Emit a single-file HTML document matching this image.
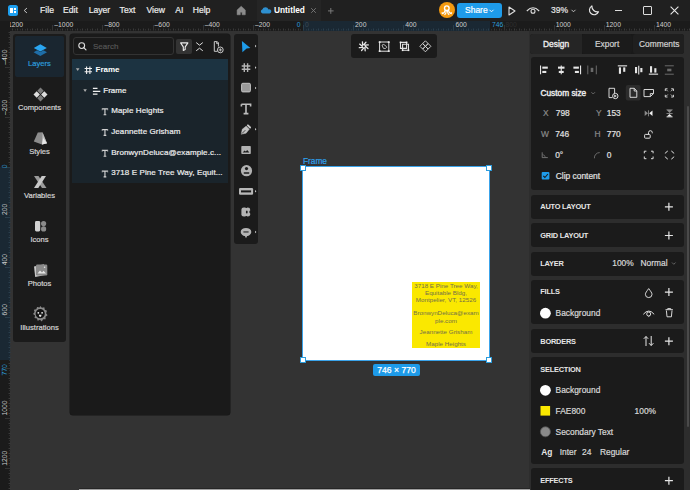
<!DOCTYPE html>
<html><head><meta charset="utf-8">
<style>
*{margin:0;padding:0;box-sizing:border-box}
html,body{width:690px;height:490px;overflow:hidden;background:#333;font-family:"Liberation Sans",sans-serif;color:#ddd}
.a{position:absolute}
.t{position:absolute;white-space:nowrap;line-height:1;-webkit-text-stroke:0.2px currentColor}
svg{position:absolute;overflow:visible}
</style></head><body>
<!-- top bar -->
<div class="a" style="left:0;top:0;width:690px;height:21px;background:#202020"></div>
<div class="a" style="left:257px;top:0;width:64px;height:21px;background:#252525"></div>
<!-- ruler -->
<div class="a" style="left:0;top:21px;width:690px;height:10px;background:#1b1b1b"></div>
<div class="a" style="left:303px;top:21px;width:187px;height:10px;background:#1a2833"></div>
<div class="a" style="left:0;top:21px;width:10px;height:469px;background:#1b1b1b"></div>
<div class="a" style="left:0;top:167px;width:10px;height:193px;background:#1a2833"></div>

<!-- RULER SVG --><svg style="left:0;top:0" width="690" height="490"><line x1="12.5" y1="28.5" x2="12.5" y2="30.5" stroke="#3a3a3a" stroke-width="1"/><line x1="15.5" y1="29" x2="15.5" y2="30.5" stroke="#2e2e2e" stroke-width="1"/><line x1="17.5" y1="28.5" x2="17.5" y2="30.5" stroke="#3a3a3a" stroke-width="1"/><line x1="20.5" y1="29" x2="20.5" y2="30.5" stroke="#2e2e2e" stroke-width="1"/><line x1="22.5" y1="28.5" x2="22.5" y2="30.5" stroke="#3a3a3a" stroke-width="1"/><line x1="25.5" y1="29" x2="25.5" y2="30.5" stroke="#2e2e2e" stroke-width="1"/><line x1="27.5" y1="28.5" x2="27.5" y2="30.5" stroke="#3a3a3a" stroke-width="1"/><line x1="30.5" y1="29" x2="30.5" y2="30.5" stroke="#2e2e2e" stroke-width="1"/><line x1="32.5" y1="28.5" x2="32.5" y2="30.5" stroke="#3a3a3a" stroke-width="1"/><line x1="35.5" y1="29" x2="35.5" y2="30.5" stroke="#2e2e2e" stroke-width="1"/><line x1="37.5" y1="28.5" x2="37.5" y2="30.5" stroke="#3a3a3a" stroke-width="1"/><line x1="40.5" y1="29" x2="40.5" y2="30.5" stroke="#2e2e2e" stroke-width="1"/><line x1="42.5" y1="28.5" x2="42.5" y2="30.5" stroke="#3a3a3a" stroke-width="1"/><line x1="45.5" y1="29" x2="45.5" y2="30.5" stroke="#2e2e2e" stroke-width="1"/><line x1="47.5" y1="28.5" x2="47.5" y2="30.5" stroke="#3a3a3a" stroke-width="1"/><line x1="50.5" y1="29" x2="50.5" y2="30.5" stroke="#2e2e2e" stroke-width="1"/><line x1="52.5" y1="25" x2="52.5" y2="30.5" stroke="#333" stroke-width="1"/><line x1="55.5" y1="29" x2="55.5" y2="30.5" stroke="#2e2e2e" stroke-width="1"/><line x1="57.5" y1="28.5" x2="57.5" y2="30.5" stroke="#3a3a3a" stroke-width="1"/><line x1="60.5" y1="29" x2="60.5" y2="30.5" stroke="#2e2e2e" stroke-width="1"/><line x1="62.5" y1="28.5" x2="62.5" y2="30.5" stroke="#3a3a3a" stroke-width="1"/><line x1="65.5" y1="29" x2="65.5" y2="30.5" stroke="#2e2e2e" stroke-width="1"/><line x1="67.5" y1="28.5" x2="67.5" y2="30.5" stroke="#3a3a3a" stroke-width="1"/><line x1="70.5" y1="29" x2="70.5" y2="30.5" stroke="#2e2e2e" stroke-width="1"/><line x1="72.5" y1="28.5" x2="72.5" y2="30.5" stroke="#3a3a3a" stroke-width="1"/><line x1="75.5" y1="29" x2="75.5" y2="30.5" stroke="#2e2e2e" stroke-width="1"/><line x1="77.5" y1="28.5" x2="77.5" y2="30.5" stroke="#3a3a3a" stroke-width="1"/><line x1="80.5" y1="29" x2="80.5" y2="30.5" stroke="#2e2e2e" stroke-width="1"/><line x1="82.5" y1="28.5" x2="82.5" y2="30.5" stroke="#3a3a3a" stroke-width="1"/><line x1="85.5" y1="29" x2="85.5" y2="30.5" stroke="#2e2e2e" stroke-width="1"/><line x1="87.5" y1="28.5" x2="87.5" y2="30.5" stroke="#3a3a3a" stroke-width="1"/><line x1="90.5" y1="29" x2="90.5" y2="30.5" stroke="#2e2e2e" stroke-width="1"/><line x1="92.5" y1="28.5" x2="92.5" y2="30.5" stroke="#3a3a3a" stroke-width="1"/><line x1="95.5" y1="29" x2="95.5" y2="30.5" stroke="#2e2e2e" stroke-width="1"/><line x1="97.5" y1="28.5" x2="97.5" y2="30.5" stroke="#3a3a3a" stroke-width="1"/><line x1="100.5" y1="29" x2="100.5" y2="30.5" stroke="#2e2e2e" stroke-width="1"/><line x1="102.5" y1="25" x2="102.5" y2="30.5" stroke="#333" stroke-width="1"/><line x1="105.5" y1="29" x2="105.5" y2="30.5" stroke="#2e2e2e" stroke-width="1"/><line x1="107.5" y1="28.5" x2="107.5" y2="30.5" stroke="#3a3a3a" stroke-width="1"/><line x1="110.5" y1="29" x2="110.5" y2="30.5" stroke="#2e2e2e" stroke-width="1"/><line x1="112.5" y1="28.5" x2="112.5" y2="30.5" stroke="#3a3a3a" stroke-width="1"/><line x1="115.5" y1="29" x2="115.5" y2="30.5" stroke="#2e2e2e" stroke-width="1"/><line x1="118.5" y1="28.5" x2="118.5" y2="30.5" stroke="#3a3a3a" stroke-width="1"/><line x1="120.5" y1="29" x2="120.5" y2="30.5" stroke="#2e2e2e" stroke-width="1"/><line x1="123.5" y1="28.5" x2="123.5" y2="30.5" stroke="#3a3a3a" stroke-width="1"/><line x1="125.5" y1="29" x2="125.5" y2="30.5" stroke="#2e2e2e" stroke-width="1"/><line x1="128.5" y1="28.5" x2="128.5" y2="30.5" stroke="#3a3a3a" stroke-width="1"/><line x1="130.5" y1="29" x2="130.5" y2="30.5" stroke="#2e2e2e" stroke-width="1"/><line x1="133.5" y1="28.5" x2="133.5" y2="30.5" stroke="#3a3a3a" stroke-width="1"/><line x1="135.5" y1="29" x2="135.5" y2="30.5" stroke="#2e2e2e" stroke-width="1"/><line x1="138.5" y1="28.5" x2="138.5" y2="30.5" stroke="#3a3a3a" stroke-width="1"/><line x1="140.5" y1="29" x2="140.5" y2="30.5" stroke="#2e2e2e" stroke-width="1"/><line x1="143.5" y1="28.5" x2="143.5" y2="30.5" stroke="#3a3a3a" stroke-width="1"/><line x1="145.5" y1="29" x2="145.5" y2="30.5" stroke="#2e2e2e" stroke-width="1"/><line x1="148.5" y1="28.5" x2="148.5" y2="30.5" stroke="#3a3a3a" stroke-width="1"/><line x1="150.5" y1="29" x2="150.5" y2="30.5" stroke="#2e2e2e" stroke-width="1"/><line x1="153.5" y1="25" x2="153.5" y2="30.5" stroke="#333" stroke-width="1"/><line x1="155.5" y1="29" x2="155.5" y2="30.5" stroke="#2e2e2e" stroke-width="1"/><line x1="158.5" y1="28.5" x2="158.5" y2="30.5" stroke="#3a3a3a" stroke-width="1"/><line x1="160.5" y1="29" x2="160.5" y2="30.5" stroke="#2e2e2e" stroke-width="1"/><line x1="163.5" y1="28.5" x2="163.5" y2="30.5" stroke="#3a3a3a" stroke-width="1"/><line x1="165.5" y1="29" x2="165.5" y2="30.5" stroke="#2e2e2e" stroke-width="1"/><line x1="168.5" y1="28.5" x2="168.5" y2="30.5" stroke="#3a3a3a" stroke-width="1"/><line x1="170.5" y1="29" x2="170.5" y2="30.5" stroke="#2e2e2e" stroke-width="1"/><line x1="173.5" y1="28.5" x2="173.5" y2="30.5" stroke="#3a3a3a" stroke-width="1"/><line x1="175.5" y1="29" x2="175.5" y2="30.5" stroke="#2e2e2e" stroke-width="1"/><line x1="178.5" y1="28.5" x2="178.5" y2="30.5" stroke="#3a3a3a" stroke-width="1"/><line x1="180.5" y1="29" x2="180.5" y2="30.5" stroke="#2e2e2e" stroke-width="1"/><line x1="183.5" y1="28.5" x2="183.5" y2="30.5" stroke="#3a3a3a" stroke-width="1"/><line x1="185.5" y1="29" x2="185.5" y2="30.5" stroke="#2e2e2e" stroke-width="1"/><line x1="188.5" y1="28.5" x2="188.5" y2="30.5" stroke="#3a3a3a" stroke-width="1"/><line x1="190.5" y1="29" x2="190.5" y2="30.5" stroke="#2e2e2e" stroke-width="1"/><line x1="193.5" y1="28.5" x2="193.5" y2="30.5" stroke="#3a3a3a" stroke-width="1"/><line x1="195.5" y1="29" x2="195.5" y2="30.5" stroke="#2e2e2e" stroke-width="1"/><line x1="198.5" y1="28.5" x2="198.5" y2="30.5" stroke="#3a3a3a" stroke-width="1"/><line x1="200.5" y1="29" x2="200.5" y2="30.5" stroke="#2e2e2e" stroke-width="1"/><line x1="203.5" y1="25" x2="203.5" y2="30.5" stroke="#333" stroke-width="1"/><line x1="205.5" y1="29" x2="205.5" y2="30.5" stroke="#2e2e2e" stroke-width="1"/><line x1="208.5" y1="28.5" x2="208.5" y2="30.5" stroke="#3a3a3a" stroke-width="1"/><line x1="210.5" y1="29" x2="210.5" y2="30.5" stroke="#2e2e2e" stroke-width="1"/><line x1="213.5" y1="28.5" x2="213.5" y2="30.5" stroke="#3a3a3a" stroke-width="1"/><line x1="215.5" y1="29" x2="215.5" y2="30.5" stroke="#2e2e2e" stroke-width="1"/><line x1="218.5" y1="28.5" x2="218.5" y2="30.5" stroke="#3a3a3a" stroke-width="1"/><line x1="220.5" y1="29" x2="220.5" y2="30.5" stroke="#2e2e2e" stroke-width="1"/><line x1="223.5" y1="28.5" x2="223.5" y2="30.5" stroke="#3a3a3a" stroke-width="1"/><line x1="225.5" y1="29" x2="225.5" y2="30.5" stroke="#2e2e2e" stroke-width="1"/><line x1="228.5" y1="28.5" x2="228.5" y2="30.5" stroke="#3a3a3a" stroke-width="1"/><line x1="230.5" y1="29" x2="230.5" y2="30.5" stroke="#2e2e2e" stroke-width="1"/><line x1="233.5" y1="28.5" x2="233.5" y2="30.5" stroke="#3a3a3a" stroke-width="1"/><line x1="235.5" y1="29" x2="235.5" y2="30.5" stroke="#2e2e2e" stroke-width="1"/><line x1="238.5" y1="28.5" x2="238.5" y2="30.5" stroke="#3a3a3a" stroke-width="1"/><line x1="240.5" y1="29" x2="240.5" y2="30.5" stroke="#2e2e2e" stroke-width="1"/><line x1="243.5" y1="28.5" x2="243.5" y2="30.5" stroke="#3a3a3a" stroke-width="1"/><line x1="245.5" y1="29" x2="245.5" y2="30.5" stroke="#2e2e2e" stroke-width="1"/><line x1="248.5" y1="28.5" x2="248.5" y2="30.5" stroke="#3a3a3a" stroke-width="1"/><line x1="250.5" y1="29" x2="250.5" y2="30.5" stroke="#2e2e2e" stroke-width="1"/><line x1="253.5" y1="25" x2="253.5" y2="30.5" stroke="#333" stroke-width="1"/><line x1="255.5" y1="29" x2="255.5" y2="30.5" stroke="#2e2e2e" stroke-width="1"/><line x1="258.5" y1="28.5" x2="258.5" y2="30.5" stroke="#3a3a3a" stroke-width="1"/><line x1="260.5" y1="29" x2="260.5" y2="30.5" stroke="#2e2e2e" stroke-width="1"/><line x1="263.5" y1="28.5" x2="263.5" y2="30.5" stroke="#3a3a3a" stroke-width="1"/><line x1="265.5" y1="29" x2="265.5" y2="30.5" stroke="#2e2e2e" stroke-width="1"/><line x1="268.5" y1="28.5" x2="268.5" y2="30.5" stroke="#3a3a3a" stroke-width="1"/><line x1="270.5" y1="29" x2="270.5" y2="30.5" stroke="#2e2e2e" stroke-width="1"/><line x1="273.5" y1="28.5" x2="273.5" y2="30.5" stroke="#3a3a3a" stroke-width="1"/><line x1="275.5" y1="29" x2="275.5" y2="30.5" stroke="#2e2e2e" stroke-width="1"/><line x1="278.5" y1="28.5" x2="278.5" y2="30.5" stroke="#3a3a3a" stroke-width="1"/><line x1="280.5" y1="29" x2="280.5" y2="30.5" stroke="#2e2e2e" stroke-width="1"/><line x1="283.5" y1="28.5" x2="283.5" y2="30.5" stroke="#3a3a3a" stroke-width="1"/><line x1="285.5" y1="29" x2="285.5" y2="30.5" stroke="#2e2e2e" stroke-width="1"/><line x1="288.5" y1="28.5" x2="288.5" y2="30.5" stroke="#3a3a3a" stroke-width="1"/><line x1="290.5" y1="29" x2="290.5" y2="30.5" stroke="#2e2e2e" stroke-width="1"/><line x1="293.5" y1="28.5" x2="293.5" y2="30.5" stroke="#3a3a3a" stroke-width="1"/><line x1="295.5" y1="29" x2="295.5" y2="30.5" stroke="#2e2e2e" stroke-width="1"/><line x1="298.5" y1="28.5" x2="298.5" y2="30.5" stroke="#3a3a3a" stroke-width="1"/><line x1="300.5" y1="29" x2="300.5" y2="30.5" stroke="#2e2e2e" stroke-width="1"/><line x1="303.5" y1="25" x2="303.5" y2="30.5" stroke="#2a3e4c" stroke-width="1"/><line x1="306.5" y1="29" x2="306.5" y2="30.5" stroke="#253540" stroke-width="1"/><line x1="308.5" y1="28.5" x2="308.5" y2="30.5" stroke="#2a3f4e" stroke-width="1"/><line x1="311.5" y1="29" x2="311.5" y2="30.5" stroke="#253540" stroke-width="1"/><line x1="313.5" y1="28.5" x2="313.5" y2="30.5" stroke="#2a3f4e" stroke-width="1"/><line x1="316.5" y1="29" x2="316.5" y2="30.5" stroke="#253540" stroke-width="1"/><line x1="318.5" y1="28.5" x2="318.5" y2="30.5" stroke="#2a3f4e" stroke-width="1"/><line x1="321.5" y1="29" x2="321.5" y2="30.5" stroke="#253540" stroke-width="1"/><line x1="323.5" y1="28.5" x2="323.5" y2="30.5" stroke="#2a3f4e" stroke-width="1"/><line x1="326.5" y1="29" x2="326.5" y2="30.5" stroke="#253540" stroke-width="1"/><line x1="328.5" y1="28.5" x2="328.5" y2="30.5" stroke="#2a3f4e" stroke-width="1"/><line x1="331.5" y1="29" x2="331.5" y2="30.5" stroke="#253540" stroke-width="1"/><line x1="333.5" y1="28.5" x2="333.5" y2="30.5" stroke="#2a3f4e" stroke-width="1"/><line x1="336.5" y1="29" x2="336.5" y2="30.5" stroke="#253540" stroke-width="1"/><line x1="338.5" y1="28.5" x2="338.5" y2="30.5" stroke="#2a3f4e" stroke-width="1"/><line x1="341.5" y1="29" x2="341.5" y2="30.5" stroke="#253540" stroke-width="1"/><line x1="343.5" y1="28.5" x2="343.5" y2="30.5" stroke="#2a3f4e" stroke-width="1"/><line x1="346.5" y1="29" x2="346.5" y2="30.5" stroke="#253540" stroke-width="1"/><line x1="348.5" y1="28.5" x2="348.5" y2="30.5" stroke="#2a3f4e" stroke-width="1"/><line x1="351.5" y1="29" x2="351.5" y2="30.5" stroke="#253540" stroke-width="1"/><line x1="353.5" y1="25" x2="353.5" y2="30.5" stroke="#2a3e4c" stroke-width="1"/><line x1="356.5" y1="29" x2="356.5" y2="30.5" stroke="#253540" stroke-width="1"/><line x1="358.5" y1="28.5" x2="358.5" y2="30.5" stroke="#2a3f4e" stroke-width="1"/><line x1="361.5" y1="29" x2="361.5" y2="30.5" stroke="#253540" stroke-width="1"/><line x1="363.5" y1="28.5" x2="363.5" y2="30.5" stroke="#2a3f4e" stroke-width="1"/><line x1="366.5" y1="29" x2="366.5" y2="30.5" stroke="#253540" stroke-width="1"/><line x1="368.5" y1="28.5" x2="368.5" y2="30.5" stroke="#2a3f4e" stroke-width="1"/><line x1="371.5" y1="29" x2="371.5" y2="30.5" stroke="#253540" stroke-width="1"/><line x1="373.5" y1="28.5" x2="373.5" y2="30.5" stroke="#2a3f4e" stroke-width="1"/><line x1="376.5" y1="29" x2="376.5" y2="30.5" stroke="#253540" stroke-width="1"/><line x1="378.5" y1="28.5" x2="378.5" y2="30.5" stroke="#2a3f4e" stroke-width="1"/><line x1="381.5" y1="29" x2="381.5" y2="30.5" stroke="#253540" stroke-width="1"/><line x1="383.5" y1="28.5" x2="383.5" y2="30.5" stroke="#2a3f4e" stroke-width="1"/><line x1="386.5" y1="29" x2="386.5" y2="30.5" stroke="#253540" stroke-width="1"/><line x1="388.5" y1="28.5" x2="388.5" y2="30.5" stroke="#2a3f4e" stroke-width="1"/><line x1="391.5" y1="29" x2="391.5" y2="30.5" stroke="#253540" stroke-width="1"/><line x1="393.5" y1="28.5" x2="393.5" y2="30.5" stroke="#2a3f4e" stroke-width="1"/><line x1="396.5" y1="29" x2="396.5" y2="30.5" stroke="#253540" stroke-width="1"/><line x1="398.5" y1="28.5" x2="398.5" y2="30.5" stroke="#2a3f4e" stroke-width="1"/><line x1="401.5" y1="29" x2="401.5" y2="30.5" stroke="#253540" stroke-width="1"/><line x1="403.5" y1="25" x2="403.5" y2="30.5" stroke="#2a3e4c" stroke-width="1"/><line x1="406.5" y1="29" x2="406.5" y2="30.5" stroke="#253540" stroke-width="1"/><line x1="408.5" y1="28.5" x2="408.5" y2="30.5" stroke="#2a3f4e" stroke-width="1"/><line x1="411.5" y1="29" x2="411.5" y2="30.5" stroke="#253540" stroke-width="1"/><line x1="413.5" y1="28.5" x2="413.5" y2="30.5" stroke="#2a3f4e" stroke-width="1"/><line x1="416.5" y1="29" x2="416.5" y2="30.5" stroke="#253540" stroke-width="1"/><line x1="418.5" y1="28.5" x2="418.5" y2="30.5" stroke="#2a3f4e" stroke-width="1"/><line x1="421.5" y1="29" x2="421.5" y2="30.5" stroke="#253540" stroke-width="1"/><line x1="423.5" y1="28.5" x2="423.5" y2="30.5" stroke="#2a3f4e" stroke-width="1"/><line x1="426.5" y1="29" x2="426.5" y2="30.5" stroke="#253540" stroke-width="1"/><line x1="428.5" y1="28.5" x2="428.5" y2="30.5" stroke="#2a3f4e" stroke-width="1"/><line x1="431.5" y1="29" x2="431.5" y2="30.5" stroke="#253540" stroke-width="1"/><line x1="433.5" y1="28.5" x2="433.5" y2="30.5" stroke="#2a3f4e" stroke-width="1"/><line x1="436.5" y1="29" x2="436.5" y2="30.5" stroke="#253540" stroke-width="1"/><line x1="438.5" y1="28.5" x2="438.5" y2="30.5" stroke="#2a3f4e" stroke-width="1"/><line x1="441.5" y1="29" x2="441.5" y2="30.5" stroke="#253540" stroke-width="1"/><line x1="443.5" y1="28.5" x2="443.5" y2="30.5" stroke="#2a3f4e" stroke-width="1"/><line x1="446.5" y1="29" x2="446.5" y2="30.5" stroke="#253540" stroke-width="1"/><line x1="448.5" y1="28.5" x2="448.5" y2="30.5" stroke="#2a3f4e" stroke-width="1"/><line x1="451.5" y1="29" x2="451.5" y2="30.5" stroke="#253540" stroke-width="1"/><line x1="453.5" y1="25" x2="453.5" y2="30.5" stroke="#2a3e4c" stroke-width="1"/><line x1="456.5" y1="29" x2="456.5" y2="30.5" stroke="#253540" stroke-width="1"/><line x1="458.5" y1="28.5" x2="458.5" y2="30.5" stroke="#2a3f4e" stroke-width="1"/><line x1="461.5" y1="29" x2="461.5" y2="30.5" stroke="#253540" stroke-width="1"/><line x1="463.5" y1="28.5" x2="463.5" y2="30.5" stroke="#2a3f4e" stroke-width="1"/><line x1="466.5" y1="29" x2="466.5" y2="30.5" stroke="#253540" stroke-width="1"/><line x1="468.5" y1="28.5" x2="468.5" y2="30.5" stroke="#2a3f4e" stroke-width="1"/><line x1="471.5" y1="29" x2="471.5" y2="30.5" stroke="#253540" stroke-width="1"/><line x1="473.5" y1="28.5" x2="473.5" y2="30.5" stroke="#2a3f4e" stroke-width="1"/><line x1="476.5" y1="29" x2="476.5" y2="30.5" stroke="#253540" stroke-width="1"/><line x1="478.5" y1="28.5" x2="478.5" y2="30.5" stroke="#2a3f4e" stroke-width="1"/><line x1="481.5" y1="29" x2="481.5" y2="30.5" stroke="#253540" stroke-width="1"/><line x1="483.5" y1="28.5" x2="483.5" y2="30.5" stroke="#2a3f4e" stroke-width="1"/><line x1="486.5" y1="29" x2="486.5" y2="30.5" stroke="#253540" stroke-width="1"/><line x1="488.5" y1="28.5" x2="488.5" y2="30.5" stroke="#2a3f4e" stroke-width="1"/><line x1="491.5" y1="29" x2="491.5" y2="30.5" stroke="#2e2e2e" stroke-width="1"/><line x1="494.5" y1="28.5" x2="494.5" y2="30.5" stroke="#3a3a3a" stroke-width="1"/><line x1="496.5" y1="29" x2="496.5" y2="30.5" stroke="#2e2e2e" stroke-width="1"/><line x1="499.5" y1="28.5" x2="499.5" y2="30.5" stroke="#3a3a3a" stroke-width="1"/><line x1="501.5" y1="29" x2="501.5" y2="30.5" stroke="#2e2e2e" stroke-width="1"/><line x1="504.5" y1="25" x2="504.5" y2="30.5" stroke="#333" stroke-width="1"/><line x1="506.5" y1="29" x2="506.5" y2="30.5" stroke="#2e2e2e" stroke-width="1"/><line x1="509.5" y1="28.5" x2="509.5" y2="30.5" stroke="#3a3a3a" stroke-width="1"/><line x1="511.5" y1="29" x2="511.5" y2="30.5" stroke="#2e2e2e" stroke-width="1"/><line x1="514.5" y1="28.5" x2="514.5" y2="30.5" stroke="#3a3a3a" stroke-width="1"/><line x1="516.5" y1="29" x2="516.5" y2="30.5" stroke="#2e2e2e" stroke-width="1"/><line x1="519.5" y1="28.5" x2="519.5" y2="30.5" stroke="#3a3a3a" stroke-width="1"/><line x1="521.5" y1="29" x2="521.5" y2="30.5" stroke="#2e2e2e" stroke-width="1"/><line x1="524.5" y1="28.5" x2="524.5" y2="30.5" stroke="#3a3a3a" stroke-width="1"/><line x1="526.5" y1="29" x2="526.5" y2="30.5" stroke="#2e2e2e" stroke-width="1"/><line x1="529.5" y1="28.5" x2="529.5" y2="30.5" stroke="#3a3a3a" stroke-width="1"/><line x1="531.5" y1="29" x2="531.5" y2="30.5" stroke="#2e2e2e" stroke-width="1"/><line x1="534.5" y1="28.5" x2="534.5" y2="30.5" stroke="#3a3a3a" stroke-width="1"/><line x1="536.5" y1="29" x2="536.5" y2="30.5" stroke="#2e2e2e" stroke-width="1"/><line x1="539.5" y1="28.5" x2="539.5" y2="30.5" stroke="#3a3a3a" stroke-width="1"/><line x1="541.5" y1="29" x2="541.5" y2="30.5" stroke="#2e2e2e" stroke-width="1"/><line x1="544.5" y1="28.5" x2="544.5" y2="30.5" stroke="#3a3a3a" stroke-width="1"/><line x1="546.5" y1="29" x2="546.5" y2="30.5" stroke="#2e2e2e" stroke-width="1"/><line x1="549.5" y1="28.5" x2="549.5" y2="30.5" stroke="#3a3a3a" stroke-width="1"/><line x1="551.5" y1="29" x2="551.5" y2="30.5" stroke="#2e2e2e" stroke-width="1"/><line x1="554.5" y1="25" x2="554.5" y2="30.5" stroke="#333" stroke-width="1"/><line x1="556.5" y1="29" x2="556.5" y2="30.5" stroke="#2e2e2e" stroke-width="1"/><line x1="559.5" y1="28.5" x2="559.5" y2="30.5" stroke="#3a3a3a" stroke-width="1"/><line x1="561.5" y1="29" x2="561.5" y2="30.5" stroke="#2e2e2e" stroke-width="1"/><line x1="564.5" y1="28.5" x2="564.5" y2="30.5" stroke="#3a3a3a" stroke-width="1"/><line x1="566.5" y1="29" x2="566.5" y2="30.5" stroke="#2e2e2e" stroke-width="1"/><line x1="569.5" y1="28.5" x2="569.5" y2="30.5" stroke="#3a3a3a" stroke-width="1"/><line x1="571.5" y1="29" x2="571.5" y2="30.5" stroke="#2e2e2e" stroke-width="1"/><line x1="574.5" y1="28.5" x2="574.5" y2="30.5" stroke="#3a3a3a" stroke-width="1"/><line x1="576.5" y1="29" x2="576.5" y2="30.5" stroke="#2e2e2e" stroke-width="1"/><line x1="579.5" y1="28.5" x2="579.5" y2="30.5" stroke="#3a3a3a" stroke-width="1"/><line x1="581.5" y1="29" x2="581.5" y2="30.5" stroke="#2e2e2e" stroke-width="1"/><line x1="584.5" y1="28.5" x2="584.5" y2="30.5" stroke="#3a3a3a" stroke-width="1"/><line x1="586.5" y1="29" x2="586.5" y2="30.5" stroke="#2e2e2e" stroke-width="1"/><line x1="589.5" y1="28.5" x2="589.5" y2="30.5" stroke="#3a3a3a" stroke-width="1"/><line x1="591.5" y1="29" x2="591.5" y2="30.5" stroke="#2e2e2e" stroke-width="1"/><line x1="594.5" y1="28.5" x2="594.5" y2="30.5" stroke="#3a3a3a" stroke-width="1"/><line x1="596.5" y1="29" x2="596.5" y2="30.5" stroke="#2e2e2e" stroke-width="1"/><line x1="599.5" y1="28.5" x2="599.5" y2="30.5" stroke="#3a3a3a" stroke-width="1"/><line x1="601.5" y1="29" x2="601.5" y2="30.5" stroke="#2e2e2e" stroke-width="1"/><line x1="604.5" y1="25" x2="604.5" y2="30.5" stroke="#333" stroke-width="1"/><line x1="606.5" y1="29" x2="606.5" y2="30.5" stroke="#2e2e2e" stroke-width="1"/><line x1="609.5" y1="28.5" x2="609.5" y2="30.5" stroke="#3a3a3a" stroke-width="1"/><line x1="611.5" y1="29" x2="611.5" y2="30.5" stroke="#2e2e2e" stroke-width="1"/><line x1="614.5" y1="28.5" x2="614.5" y2="30.5" stroke="#3a3a3a" stroke-width="1"/><line x1="616.5" y1="29" x2="616.5" y2="30.5" stroke="#2e2e2e" stroke-width="1"/><line x1="619.5" y1="28.5" x2="619.5" y2="30.5" stroke="#3a3a3a" stroke-width="1"/><line x1="621.5" y1="29" x2="621.5" y2="30.5" stroke="#2e2e2e" stroke-width="1"/><line x1="624.5" y1="28.5" x2="624.5" y2="30.5" stroke="#3a3a3a" stroke-width="1"/><line x1="626.5" y1="29" x2="626.5" y2="30.5" stroke="#2e2e2e" stroke-width="1"/><line x1="629.5" y1="28.5" x2="629.5" y2="30.5" stroke="#3a3a3a" stroke-width="1"/><line x1="631.5" y1="29" x2="631.5" y2="30.5" stroke="#2e2e2e" stroke-width="1"/><line x1="634.5" y1="28.5" x2="634.5" y2="30.5" stroke="#3a3a3a" stroke-width="1"/><line x1="636.5" y1="29" x2="636.5" y2="30.5" stroke="#2e2e2e" stroke-width="1"/><line x1="639.5" y1="28.5" x2="639.5" y2="30.5" stroke="#3a3a3a" stroke-width="1"/><line x1="641.5" y1="29" x2="641.5" y2="30.5" stroke="#2e2e2e" stroke-width="1"/><line x1="644.5" y1="28.5" x2="644.5" y2="30.5" stroke="#3a3a3a" stroke-width="1"/><line x1="646.5" y1="29" x2="646.5" y2="30.5" stroke="#2e2e2e" stroke-width="1"/><line x1="649.5" y1="28.5" x2="649.5" y2="30.5" stroke="#3a3a3a" stroke-width="1"/><line x1="651.5" y1="29" x2="651.5" y2="30.5" stroke="#2e2e2e" stroke-width="1"/><line x1="654.5" y1="25" x2="654.5" y2="30.5" stroke="#333" stroke-width="1"/><line x1="656.5" y1="29" x2="656.5" y2="30.5" stroke="#2e2e2e" stroke-width="1"/><line x1="659.5" y1="28.5" x2="659.5" y2="30.5" stroke="#3a3a3a" stroke-width="1"/><line x1="661.5" y1="29" x2="661.5" y2="30.5" stroke="#2e2e2e" stroke-width="1"/><line x1="664.5" y1="28.5" x2="664.5" y2="30.5" stroke="#3a3a3a" stroke-width="1"/><line x1="666.5" y1="29" x2="666.5" y2="30.5" stroke="#2e2e2e" stroke-width="1"/><line x1="669.5" y1="28.5" x2="669.5" y2="30.5" stroke="#3a3a3a" stroke-width="1"/><line x1="671.5" y1="29" x2="671.5" y2="30.5" stroke="#2e2e2e" stroke-width="1"/><line x1="674.5" y1="28.5" x2="674.5" y2="30.5" stroke="#3a3a3a" stroke-width="1"/><line x1="676.5" y1="29" x2="676.5" y2="30.5" stroke="#2e2e2e" stroke-width="1"/><line x1="679.5" y1="28.5" x2="679.5" y2="30.5" stroke="#3a3a3a" stroke-width="1"/><line x1="682.5" y1="29" x2="682.5" y2="30.5" stroke="#2e2e2e" stroke-width="1"/><line x1="684.5" y1="28.5" x2="684.5" y2="30.5" stroke="#3a3a3a" stroke-width="1"/><line x1="687.5" y1="29" x2="687.5" y2="30.5" stroke="#2e2e2e" stroke-width="1"/><line x1="689.5" y1="28.5" x2="689.5" y2="30.5" stroke="#3a3a3a" stroke-width="1"/><g font-family="Liberation Sans" font-size="6.8"><text x="4.2" y="27.2" fill="#cdcdcd">–1200</text><text x="54.3" y="27.2" fill="#cdcdcd">–1000</text><text x="104.5" y="27.2" fill="#cdcdcd">–800</text><text x="154.6" y="27.2" fill="#cdcdcd">–600</text><text x="204.7" y="27.2" fill="#cdcdcd">–400</text><text x="254.9" y="27.2" fill="#cdcdcd">–200</text><text x="305.0" y="27.2" fill="#3a4a55">0</text><text x="355.1" y="27.2" fill="#cdcdcd">200</text><text x="405.3" y="27.2" fill="#cdcdcd">400</text><text x="455.4" y="27.2" fill="#cdcdcd">600</text><text x="505.5" y="27.2" fill="#2e2e2e">800</text><text x="555.7" y="27.2" fill="#cdcdcd">1000</text><text x="605.8" y="27.2" fill="#cdcdcd">1200</text><text x="655.9" y="27.2" fill="#cdcdcd">1400</text><text x="300.5" y="27.2" fill="#2d9cdb" text-anchor="end">0</text><text x="492" y="27.2" fill="#2d9cdb">746</text></g><line x1="8.5" y1="32.5" x2="10.5" y2="32.5" stroke="#3a3a3a" stroke-width="1"/><line x1="9" y1="34.5" x2="10.5" y2="34.5" stroke="#2e2e2e" stroke-width="1"/><line x1="8.5" y1="37.5" x2="10.5" y2="37.5" stroke="#3a3a3a" stroke-width="1"/><line x1="9" y1="39.5" x2="10.5" y2="39.5" stroke="#2e2e2e" stroke-width="1"/><line x1="8.5" y1="42.5" x2="10.5" y2="42.5" stroke="#3a3a3a" stroke-width="1"/><line x1="9" y1="44.5" x2="10.5" y2="44.5" stroke="#2e2e2e" stroke-width="1"/><line x1="8.5" y1="47.5" x2="10.5" y2="47.5" stroke="#3a3a3a" stroke-width="1"/><line x1="9" y1="49.5" x2="10.5" y2="49.5" stroke="#2e2e2e" stroke-width="1"/><line x1="8.5" y1="52.5" x2="10.5" y2="52.5" stroke="#3a3a3a" stroke-width="1"/><line x1="9" y1="54.5" x2="10.5" y2="54.5" stroke="#2e2e2e" stroke-width="1"/><line x1="8.5" y1="57.5" x2="10.5" y2="57.5" stroke="#3a3a3a" stroke-width="1"/><line x1="9" y1="59.5" x2="10.5" y2="59.5" stroke="#2e2e2e" stroke-width="1"/><line x1="8.5" y1="62.5" x2="10.5" y2="62.5" stroke="#3a3a3a" stroke-width="1"/><line x1="9" y1="64.5" x2="10.5" y2="64.5" stroke="#2e2e2e" stroke-width="1"/><line x1="5" y1="67.5" x2="10.5" y2="67.5" stroke="#333" stroke-width="1"/><line x1="9" y1="69.5" x2="10.5" y2="69.5" stroke="#2e2e2e" stroke-width="1"/><line x1="8.5" y1="72.5" x2="10.5" y2="72.5" stroke="#3a3a3a" stroke-width="1"/><line x1="9" y1="74.5" x2="10.5" y2="74.5" stroke="#2e2e2e" stroke-width="1"/><line x1="8.5" y1="77.5" x2="10.5" y2="77.5" stroke="#3a3a3a" stroke-width="1"/><line x1="9" y1="79.5" x2="10.5" y2="79.5" stroke="#2e2e2e" stroke-width="1"/><line x1="8.5" y1="82.5" x2="10.5" y2="82.5" stroke="#3a3a3a" stroke-width="1"/><line x1="9" y1="84.5" x2="10.5" y2="84.5" stroke="#2e2e2e" stroke-width="1"/><line x1="8.5" y1="87.5" x2="10.5" y2="87.5" stroke="#3a3a3a" stroke-width="1"/><line x1="9" y1="89.5" x2="10.5" y2="89.5" stroke="#2e2e2e" stroke-width="1"/><line x1="8.5" y1="92.5" x2="10.5" y2="92.5" stroke="#3a3a3a" stroke-width="1"/><line x1="9" y1="94.5" x2="10.5" y2="94.5" stroke="#2e2e2e" stroke-width="1"/><line x1="8.5" y1="97.5" x2="10.5" y2="97.5" stroke="#3a3a3a" stroke-width="1"/><line x1="9" y1="99.5" x2="10.5" y2="99.5" stroke="#2e2e2e" stroke-width="1"/><line x1="8.5" y1="102.5" x2="10.5" y2="102.5" stroke="#3a3a3a" stroke-width="1"/><line x1="9" y1="104.5" x2="10.5" y2="104.5" stroke="#2e2e2e" stroke-width="1"/><line x1="8.5" y1="107.5" x2="10.5" y2="107.5" stroke="#3a3a3a" stroke-width="1"/><line x1="9" y1="109.5" x2="10.5" y2="109.5" stroke="#2e2e2e" stroke-width="1"/><line x1="8.5" y1="112.5" x2="10.5" y2="112.5" stroke="#3a3a3a" stroke-width="1"/><line x1="9" y1="114.5" x2="10.5" y2="114.5" stroke="#2e2e2e" stroke-width="1"/><line x1="5" y1="117.5" x2="10.5" y2="117.5" stroke="#333" stroke-width="1"/><line x1="9" y1="119.5" x2="10.5" y2="119.5" stroke="#2e2e2e" stroke-width="1"/><line x1="8.5" y1="122.5" x2="10.5" y2="122.5" stroke="#3a3a3a" stroke-width="1"/><line x1="9" y1="124.5" x2="10.5" y2="124.5" stroke="#2e2e2e" stroke-width="1"/><line x1="8.5" y1="127.5" x2="10.5" y2="127.5" stroke="#3a3a3a" stroke-width="1"/><line x1="9" y1="129.5" x2="10.5" y2="129.5" stroke="#2e2e2e" stroke-width="1"/><line x1="8.5" y1="132.5" x2="10.5" y2="132.5" stroke="#3a3a3a" stroke-width="1"/><line x1="9" y1="134.5" x2="10.5" y2="134.5" stroke="#2e2e2e" stroke-width="1"/><line x1="8.5" y1="137.5" x2="10.5" y2="137.5" stroke="#3a3a3a" stroke-width="1"/><line x1="9" y1="139.5" x2="10.5" y2="139.5" stroke="#2e2e2e" stroke-width="1"/><line x1="8.5" y1="142.5" x2="10.5" y2="142.5" stroke="#3a3a3a" stroke-width="1"/><line x1="9" y1="144.5" x2="10.5" y2="144.5" stroke="#2e2e2e" stroke-width="1"/><line x1="8.5" y1="147.5" x2="10.5" y2="147.5" stroke="#3a3a3a" stroke-width="1"/><line x1="9" y1="149.5" x2="10.5" y2="149.5" stroke="#2e2e2e" stroke-width="1"/><line x1="8.5" y1="152.5" x2="10.5" y2="152.5" stroke="#3a3a3a" stroke-width="1"/><line x1="9" y1="154.5" x2="10.5" y2="154.5" stroke="#2e2e2e" stroke-width="1"/><line x1="8.5" y1="157.5" x2="10.5" y2="157.5" stroke="#3a3a3a" stroke-width="1"/><line x1="9" y1="159.5" x2="10.5" y2="159.5" stroke="#2e2e2e" stroke-width="1"/><line x1="8.5" y1="162.5" x2="10.5" y2="162.5" stroke="#3a3a3a" stroke-width="1"/><line x1="9" y1="164.5" x2="10.5" y2="164.5" stroke="#2e2e2e" stroke-width="1"/><line x1="5" y1="167.5" x2="10.5" y2="167.5" stroke="#2a3e4c" stroke-width="1"/><line x1="9" y1="170.5" x2="10.5" y2="170.5" stroke="#253540" stroke-width="1"/><line x1="8.5" y1="172.5" x2="10.5" y2="172.5" stroke="#2a3f4e" stroke-width="1"/><line x1="9" y1="175.5" x2="10.5" y2="175.5" stroke="#253540" stroke-width="1"/><line x1="8.5" y1="177.5" x2="10.5" y2="177.5" stroke="#2a3f4e" stroke-width="1"/><line x1="9" y1="180.5" x2="10.5" y2="180.5" stroke="#253540" stroke-width="1"/><line x1="8.5" y1="182.5" x2="10.5" y2="182.5" stroke="#2a3f4e" stroke-width="1"/><line x1="9" y1="185.5" x2="10.5" y2="185.5" stroke="#253540" stroke-width="1"/><line x1="8.5" y1="187.5" x2="10.5" y2="187.5" stroke="#2a3f4e" stroke-width="1"/><line x1="9" y1="190.5" x2="10.5" y2="190.5" stroke="#253540" stroke-width="1"/><line x1="8.5" y1="192.5" x2="10.5" y2="192.5" stroke="#2a3f4e" stroke-width="1"/><line x1="9" y1="195.5" x2="10.5" y2="195.5" stroke="#253540" stroke-width="1"/><line x1="8.5" y1="197.5" x2="10.5" y2="197.5" stroke="#2a3f4e" stroke-width="1"/><line x1="9" y1="200.5" x2="10.5" y2="200.5" stroke="#253540" stroke-width="1"/><line x1="8.5" y1="202.5" x2="10.5" y2="202.5" stroke="#2a3f4e" stroke-width="1"/><line x1="9" y1="205.5" x2="10.5" y2="205.5" stroke="#253540" stroke-width="1"/><line x1="8.5" y1="207.5" x2="10.5" y2="207.5" stroke="#2a3f4e" stroke-width="1"/><line x1="9" y1="210.5" x2="10.5" y2="210.5" stroke="#253540" stroke-width="1"/><line x1="8.5" y1="212.5" x2="10.5" y2="212.5" stroke="#2a3f4e" stroke-width="1"/><line x1="9" y1="215.5" x2="10.5" y2="215.5" stroke="#253540" stroke-width="1"/><line x1="5" y1="217.5" x2="10.5" y2="217.5" stroke="#2a3e4c" stroke-width="1"/><line x1="9" y1="220.5" x2="10.5" y2="220.5" stroke="#253540" stroke-width="1"/><line x1="8.5" y1="222.5" x2="10.5" y2="222.5" stroke="#2a3f4e" stroke-width="1"/><line x1="9" y1="225.5" x2="10.5" y2="225.5" stroke="#253540" stroke-width="1"/><line x1="8.5" y1="227.5" x2="10.5" y2="227.5" stroke="#2a3f4e" stroke-width="1"/><line x1="9" y1="230.5" x2="10.5" y2="230.5" stroke="#253540" stroke-width="1"/><line x1="8.5" y1="232.5" x2="10.5" y2="232.5" stroke="#2a3f4e" stroke-width="1"/><line x1="9" y1="235.5" x2="10.5" y2="235.5" stroke="#253540" stroke-width="1"/><line x1="8.5" y1="237.5" x2="10.5" y2="237.5" stroke="#2a3f4e" stroke-width="1"/><line x1="9" y1="240.5" x2="10.5" y2="240.5" stroke="#253540" stroke-width="1"/><line x1="8.5" y1="242.5" x2="10.5" y2="242.5" stroke="#2a3f4e" stroke-width="1"/><line x1="9" y1="245.5" x2="10.5" y2="245.5" stroke="#253540" stroke-width="1"/><line x1="8.5" y1="247.5" x2="10.5" y2="247.5" stroke="#2a3f4e" stroke-width="1"/><line x1="9" y1="250.5" x2="10.5" y2="250.5" stroke="#253540" stroke-width="1"/><line x1="8.5" y1="252.5" x2="10.5" y2="252.5" stroke="#2a3f4e" stroke-width="1"/><line x1="9" y1="255.5" x2="10.5" y2="255.5" stroke="#253540" stroke-width="1"/><line x1="8.5" y1="257.5" x2="10.5" y2="257.5" stroke="#2a3f4e" stroke-width="1"/><line x1="9" y1="260.5" x2="10.5" y2="260.5" stroke="#253540" stroke-width="1"/><line x1="8.5" y1="262.5" x2="10.5" y2="262.5" stroke="#2a3f4e" stroke-width="1"/><line x1="9" y1="265.5" x2="10.5" y2="265.5" stroke="#253540" stroke-width="1"/><line x1="5" y1="267.5" x2="10.5" y2="267.5" stroke="#2a3e4c" stroke-width="1"/><line x1="9" y1="270.5" x2="10.5" y2="270.5" stroke="#253540" stroke-width="1"/><line x1="8.5" y1="272.5" x2="10.5" y2="272.5" stroke="#2a3f4e" stroke-width="1"/><line x1="9" y1="275.5" x2="10.5" y2="275.5" stroke="#253540" stroke-width="1"/><line x1="8.5" y1="277.5" x2="10.5" y2="277.5" stroke="#2a3f4e" stroke-width="1"/><line x1="9" y1="280.5" x2="10.5" y2="280.5" stroke="#253540" stroke-width="1"/><line x1="8.5" y1="282.5" x2="10.5" y2="282.5" stroke="#2a3f4e" stroke-width="1"/><line x1="9" y1="285.5" x2="10.5" y2="285.5" stroke="#253540" stroke-width="1"/><line x1="8.5" y1="287.5" x2="10.5" y2="287.5" stroke="#2a3f4e" stroke-width="1"/><line x1="9" y1="290.5" x2="10.5" y2="290.5" stroke="#253540" stroke-width="1"/><line x1="8.5" y1="292.5" x2="10.5" y2="292.5" stroke="#2a3f4e" stroke-width="1"/><line x1="9" y1="295.5" x2="10.5" y2="295.5" stroke="#253540" stroke-width="1"/><line x1="8.5" y1="297.5" x2="10.5" y2="297.5" stroke="#2a3f4e" stroke-width="1"/><line x1="9" y1="300.5" x2="10.5" y2="300.5" stroke="#253540" stroke-width="1"/><line x1="8.5" y1="302.5" x2="10.5" y2="302.5" stroke="#2a3f4e" stroke-width="1"/><line x1="9" y1="305.5" x2="10.5" y2="305.5" stroke="#253540" stroke-width="1"/><line x1="8.5" y1="307.5" x2="10.5" y2="307.5" stroke="#2a3f4e" stroke-width="1"/><line x1="9" y1="310.5" x2="10.5" y2="310.5" stroke="#253540" stroke-width="1"/><line x1="8.5" y1="312.5" x2="10.5" y2="312.5" stroke="#2a3f4e" stroke-width="1"/><line x1="9" y1="315.5" x2="10.5" y2="315.5" stroke="#253540" stroke-width="1"/><line x1="5" y1="317.5" x2="10.5" y2="317.5" stroke="#2a3e4c" stroke-width="1"/><line x1="9" y1="320.5" x2="10.5" y2="320.5" stroke="#253540" stroke-width="1"/><line x1="8.5" y1="322.5" x2="10.5" y2="322.5" stroke="#2a3f4e" stroke-width="1"/><line x1="9" y1="325.5" x2="10.5" y2="325.5" stroke="#253540" stroke-width="1"/><line x1="8.5" y1="327.5" x2="10.5" y2="327.5" stroke="#2a3f4e" stroke-width="1"/><line x1="9" y1="330.5" x2="10.5" y2="330.5" stroke="#253540" stroke-width="1"/><line x1="8.5" y1="332.5" x2="10.5" y2="332.5" stroke="#2a3f4e" stroke-width="1"/><line x1="9" y1="335.5" x2="10.5" y2="335.5" stroke="#253540" stroke-width="1"/><line x1="8.5" y1="337.5" x2="10.5" y2="337.5" stroke="#2a3f4e" stroke-width="1"/><line x1="9" y1="340.5" x2="10.5" y2="340.5" stroke="#253540" stroke-width="1"/><line x1="8.5" y1="342.5" x2="10.5" y2="342.5" stroke="#2a3f4e" stroke-width="1"/><line x1="9" y1="345.5" x2="10.5" y2="345.5" stroke="#253540" stroke-width="1"/><line x1="8.5" y1="347.5" x2="10.5" y2="347.5" stroke="#2a3f4e" stroke-width="1"/><line x1="9" y1="350.5" x2="10.5" y2="350.5" stroke="#253540" stroke-width="1"/><line x1="8.5" y1="352.5" x2="10.5" y2="352.5" stroke="#2a3f4e" stroke-width="1"/><line x1="9" y1="355.5" x2="10.5" y2="355.5" stroke="#253540" stroke-width="1"/><line x1="8.5" y1="357.5" x2="10.5" y2="357.5" stroke="#2a3f4e" stroke-width="1"/><line x1="9" y1="360.5" x2="10.5" y2="360.5" stroke="#253540" stroke-width="1"/><line x1="8.5" y1="363.5" x2="10.5" y2="363.5" stroke="#3a3a3a" stroke-width="1"/><line x1="9" y1="365.5" x2="10.5" y2="365.5" stroke="#2e2e2e" stroke-width="1"/><line x1="5" y1="368.5" x2="10.5" y2="368.5" stroke="#333" stroke-width="1"/><line x1="9" y1="370.5" x2="10.5" y2="370.5" stroke="#2e2e2e" stroke-width="1"/><line x1="8.5" y1="373.5" x2="10.5" y2="373.5" stroke="#3a3a3a" stroke-width="1"/><line x1="9" y1="375.5" x2="10.5" y2="375.5" stroke="#2e2e2e" stroke-width="1"/><line x1="8.5" y1="378.5" x2="10.5" y2="378.5" stroke="#3a3a3a" stroke-width="1"/><line x1="9" y1="380.5" x2="10.5" y2="380.5" stroke="#2e2e2e" stroke-width="1"/><line x1="8.5" y1="383.5" x2="10.5" y2="383.5" stroke="#3a3a3a" stroke-width="1"/><line x1="9" y1="385.5" x2="10.5" y2="385.5" stroke="#2e2e2e" stroke-width="1"/><line x1="8.5" y1="388.5" x2="10.5" y2="388.5" stroke="#3a3a3a" stroke-width="1"/><line x1="9" y1="390.5" x2="10.5" y2="390.5" stroke="#2e2e2e" stroke-width="1"/><line x1="8.5" y1="393.5" x2="10.5" y2="393.5" stroke="#3a3a3a" stroke-width="1"/><line x1="9" y1="395.5" x2="10.5" y2="395.5" stroke="#2e2e2e" stroke-width="1"/><line x1="8.5" y1="398.5" x2="10.5" y2="398.5" stroke="#3a3a3a" stroke-width="1"/><line x1="9" y1="400.5" x2="10.5" y2="400.5" stroke="#2e2e2e" stroke-width="1"/><line x1="8.5" y1="403.5" x2="10.5" y2="403.5" stroke="#3a3a3a" stroke-width="1"/><line x1="9" y1="405.5" x2="10.5" y2="405.5" stroke="#2e2e2e" stroke-width="1"/><line x1="8.5" y1="408.5" x2="10.5" y2="408.5" stroke="#3a3a3a" stroke-width="1"/><line x1="9" y1="410.5" x2="10.5" y2="410.5" stroke="#2e2e2e" stroke-width="1"/><line x1="8.5" y1="413.5" x2="10.5" y2="413.5" stroke="#3a3a3a" stroke-width="1"/><line x1="9" y1="415.5" x2="10.5" y2="415.5" stroke="#2e2e2e" stroke-width="1"/><line x1="5" y1="418.5" x2="10.5" y2="418.5" stroke="#333" stroke-width="1"/><line x1="9" y1="420.5" x2="10.5" y2="420.5" stroke="#2e2e2e" stroke-width="1"/><line x1="8.5" y1="423.5" x2="10.5" y2="423.5" stroke="#3a3a3a" stroke-width="1"/><line x1="9" y1="425.5" x2="10.5" y2="425.5" stroke="#2e2e2e" stroke-width="1"/><line x1="8.5" y1="428.5" x2="10.5" y2="428.5" stroke="#3a3a3a" stroke-width="1"/><line x1="9" y1="430.5" x2="10.5" y2="430.5" stroke="#2e2e2e" stroke-width="1"/><line x1="8.5" y1="433.5" x2="10.5" y2="433.5" stroke="#3a3a3a" stroke-width="1"/><line x1="9" y1="435.5" x2="10.5" y2="435.5" stroke="#2e2e2e" stroke-width="1"/><line x1="8.5" y1="438.5" x2="10.5" y2="438.5" stroke="#3a3a3a" stroke-width="1"/><line x1="9" y1="440.5" x2="10.5" y2="440.5" stroke="#2e2e2e" stroke-width="1"/><line x1="8.5" y1="443.5" x2="10.5" y2="443.5" stroke="#3a3a3a" stroke-width="1"/><line x1="9" y1="445.5" x2="10.5" y2="445.5" stroke="#2e2e2e" stroke-width="1"/><line x1="8.5" y1="448.5" x2="10.5" y2="448.5" stroke="#3a3a3a" stroke-width="1"/><line x1="9" y1="450.5" x2="10.5" y2="450.5" stroke="#2e2e2e" stroke-width="1"/><line x1="8.5" y1="453.5" x2="10.5" y2="453.5" stroke="#3a3a3a" stroke-width="1"/><line x1="9" y1="455.5" x2="10.5" y2="455.5" stroke="#2e2e2e" stroke-width="1"/><line x1="8.5" y1="458.5" x2="10.5" y2="458.5" stroke="#3a3a3a" stroke-width="1"/><line x1="9" y1="460.5" x2="10.5" y2="460.5" stroke="#2e2e2e" stroke-width="1"/><line x1="8.5" y1="463.5" x2="10.5" y2="463.5" stroke="#3a3a3a" stroke-width="1"/><line x1="9" y1="465.5" x2="10.5" y2="465.5" stroke="#2e2e2e" stroke-width="1"/><line x1="5" y1="468.5" x2="10.5" y2="468.5" stroke="#333" stroke-width="1"/><line x1="9" y1="470.5" x2="10.5" y2="470.5" stroke="#2e2e2e" stroke-width="1"/><line x1="8.5" y1="473.5" x2="10.5" y2="473.5" stroke="#3a3a3a" stroke-width="1"/><line x1="9" y1="475.5" x2="10.5" y2="475.5" stroke="#2e2e2e" stroke-width="1"/><line x1="8.5" y1="478.5" x2="10.5" y2="478.5" stroke="#3a3a3a" stroke-width="1"/><line x1="9" y1="480.5" x2="10.5" y2="480.5" stroke="#2e2e2e" stroke-width="1"/><line x1="8.5" y1="483.5" x2="10.5" y2="483.5" stroke="#3a3a3a" stroke-width="1"/><line x1="9" y1="485.5" x2="10.5" y2="485.5" stroke="#2e2e2e" stroke-width="1"/><line x1="8.5" y1="488.5" x2="10.5" y2="488.5" stroke="#3a3a3a" stroke-width="1"/><g font-family="Liberation Sans" font-size="6.8"><text transform="translate(6.8 64.7) rotate(-90)" fill="#cdcdcd">–400</text><text transform="translate(6.8 114.9) rotate(-90)" fill="#cdcdcd">–200</text><text transform="translate(6.8 215.1) rotate(-90)" fill="#cdcdcd">200</text><text transform="translate(6.8 265.3) rotate(-90)" fill="#cdcdcd">400</text><text transform="translate(6.8 315.4) rotate(-90)" fill="#cdcdcd">600</text><text transform="translate(6.8 415.6) rotate(-90)" fill="#cdcdcd">1000</text><text transform="translate(6.8 465.8) rotate(-90)" fill="#cdcdcd">1200</text><text transform="translate(6.8 164.5) rotate(-90)" fill="#2d9cdb" text-anchor="end">0</text><text transform="translate(6.8 375.5) rotate(-90)" fill="#2d9cdb" text-anchor="start">770</text></g></svg><!-- /RULER SVG -->
<div class="a" style="left:0;top:21px;width:10px;height:10px;background:#1b1b1b"></div>
<!-- TOPBAR CONTENT -->
<div class="a" style="left:7.7px;top:5.3px;width:10.5px;height:10.5px;background:#1ea0f0;border-radius:2.5px"></div>
<div class="a" style="left:9.9px;top:8.1px;width:3px;height:4.8px;background:#fff"></div>
<div class="a" style="left:14.1px;top:8.1px;width:1.9px;height:1.8px;background:#fff"></div>
<div class="a" style="left:14.1px;top:11.1px;width:1.9px;height:1.8px;background:#fff"></div>
<svg style="left:23px;top:7px" width="5" height="7"><path d="M3.9 1.1 L1.2 3.5 L3.9 5.9" stroke="#ccc" stroke-width="1" fill="none"/></svg>
<div class="t" style="left:40.1px;top:5.72px;font-size:8.6px;color:#ececec">File</div>
<div class="t" style="left:63px;top:5.72px;font-size:8.6px;color:#ececec">Edit</div>
<div class="t" style="left:88.7px;top:5.72px;font-size:8.6px;color:#ececec">Layer</div>
<div class="t" style="left:119.6px;top:5.72px;font-size:8.6px;color:#ececec">Text</div>
<div class="t" style="left:146.5px;top:5.72px;font-size:8.6px;color:#ececec">View</div>
<div class="t" style="left:175.2px;top:5.72px;font-size:8.6px;color:#ececec">AI</div>
<div class="t" style="left:192.7px;top:5.72px;font-size:8.6px;color:#ececec">Help</div>
<svg style="left:0;top:0" width="300" height="20"><path d="M241.2 6.2 L245.3 10 V14.8 H242.1 V12.2 H240.3 V14.8 H237.1 V10 Z" fill="#8c8c8c" stroke="#8c8c8c" stroke-width="0.5" stroke-linejoin="round"/></svg>
<svg style="left:0;top:0" width="300" height="20"><path d="M262.6 13.4 A2 2 0 0 1 262.3 9.5 A3.4 3.4 0 0 1 268.6 9.4 A2 2 0 0 1 271.3 11.5 A1.9 1.9 0 0 1 269.6 13.4 Z" fill="#2e90d0"/></svg>
<div class="t" style="left:274px;top:6.27px;font-size:8.3px;font-weight:bold;-webkit-text-stroke:0;color:#fff">Untitled</div>
<svg style="left:310.5px;top:8px" width="5" height="5"><path d="M0.2 0.2 L4.8 4.8 M4.8 0.2 L0.2 4.8" stroke="#7a7a7a" stroke-width="0.9"/></svg>
<svg style="left:328.3px;top:7.5px" width="6" height="6"><path d="M2.8 0 V5.8 M0 2.9 H5.6" stroke="#7a7a7a" stroke-width="1"/></svg>
<div class="a" style="left:438.7px;top:2px;width:16px;height:16px;background:#f59a0f;border-radius:50%"></div>
<svg style="left:0;top:0" width="690" height="20"><circle cx="446.8" cy="8.2" r="2.3" fill="none" stroke="#fff" stroke-width="1.4"/><path d="M445.2 10.2 Q444.6 13.2 442.3 13.6 M446.3 10.8 Q446 14 444.8 14.6 M447.4 10.8 Q447.7 14 448.9 14.6 M448.5 10.2 Q449 13.2 451.3 13.6" stroke="#fff" stroke-width="1.1" fill="none" stroke-linecap="round"/><path d="M442.3 13.6 Q441.5 12.8 442.6 12 M451.3 13.6 Q452.1 12.8 451 12" stroke="#fff" stroke-width="0.9" fill="none"/></svg>
<div class="a" style="left:457px;top:2.5px;width:44.5px;height:15.5px;background:#1e9be9;border-radius:3px"></div>
<div class="t" style="left:465px;top:5.9px;font-size:8.5px;color:#fff">Share</div>
<svg style="left:489px;top:9px" width="5" height="4"><path d="M0.5 0.8 L2.5 2.8 L4.5 0.8" stroke="#fff" stroke-width="0.9" fill="none"/></svg>
<svg style="left:508px;top:5.5px" width="8" height="10"><path d="M1 1 L7 5 L1 9 Z" stroke="#ddd" stroke-width="1.1" fill="none" stroke-linejoin="round"/></svg>
<svg style="left:526px;top:6px" width="14" height="9"><path d="M0.8 5 Q7 -1.5 13.2 5" stroke="#ddd" stroke-width="1.1" fill="none"/><circle cx="7" cy="5.2" r="2" fill="none" stroke="#ddd" stroke-width="1.1"/></svg>
<div class="t" style="left:551px;top:5.9px;font-size:8.5px;color:#e6e6e6">39%</div>
<svg style="left:571px;top:9px" width="5" height="4"><path d="M0.5 0.8 L2.5 2.8 L4.5 0.8" stroke="#ccc" stroke-width="0.9" fill="none"/></svg>
<svg style="left:0;top:0" width="690" height="20"><path d="M591.9 5.9 A4.7 4.7 0 1 0 598.5 11.8 A5.6 5.6 0 0 1 591.9 5.9 Z" stroke="#e6e6e6" stroke-width="1.15" fill="none" stroke-linejoin="round"/></svg>
<div class="a" style="left:615px;top:10px;width:7px;height:1px;background:#ddd"></div>
<div class="a" style="left:643px;top:6px;width:9px;height:9px;border:1.1px solid #ddd;border-radius:1px"></div>
<svg style="left:670px;top:6px" width="9" height="9"><path d="M0.6 0.6 L8.4 8.4 M8.4 0.6 L0.6 8.4" stroke="#e6e6e6" stroke-width="1.1"/></svg>

<!-- left nav -->
<div class="a" style="left:13px;top:34px;width:53px;height:308px;background:#1b1b1b;border-radius:3px"></div>
<div class="a" style="left:15px;top:35.7px;width:49px;height:41.8px;background:#1a2630;border-radius:2px"></div>

<!-- NAV --><svg style="left:0;top:0" width="70" height="340">
<path d="M33.6 52.3 L40.3 48.6 L47 52.3 L40.3 56 Z" fill="#1f6ea8"/>
<path d="M33.2 48 L40.3 44 L47.4 48 L40.3 52 Z" fill="#1a2630"/>
<path d="M33.8 48 L40.3 44.3 L46.8 48 L40.3 51.6 Z" fill="#2aa6f2"/>
<g>
<path d="M37.30 90.7 L40.5 87.50 L43.70 90.7 L40.5 93.90 Z" fill="#7c7c7c"/>
<path d="M37.30 98.3 L40.5 95.10 L43.70 98.3 L40.5 101.50 Z" fill="#7c7c7c"/>
<path d="M33.50 94.5 L36.7 91.30 L39.90 94.5 L36.7 97.70 Z" fill="#dedede"/>
<path d="M41.10 94.5 L44.3 91.30 L47.50 94.5 L44.3 97.70 Z" fill="#dedede"/>
</g>
<path d="M37.8 132.5 L42.6 132.2 L47 143.2 L42 144.5 L33.8 141.5 Z" fill="#8c8c8c"/>
<path d="M42.6 132.8 L47 143.2 L42 144.5 Z" fill="#bdbdbd"/>
<path d="M43.2 138 L47 143.2 L42 144.5 Z" fill="#e8e8e8"/>
<path d="M34 176 H38.5 L46.5 188 H42 Z" fill="#9a9a9a"/>
<path d="M46 176 H41.7 L34 188 H38.3 Z" fill="#c8c8c8"/>
<rect x="35" y="221" width="5.2" height="10.5" rx="1.4" fill="#d2d2d2"/>
<circle cx="43.6" cy="223.6" r="2.6" fill="#8a8a8a"/>
<circle cx="43.6" cy="228.9" r="2.6" fill="#8a8a8a"/>
<path d="M34 266.5 L44 264.3 L45.2 275 L35.2 277 Z" fill="#c8c8c8"/>
<rect x="36" y="264.5" width="11.3" height="11" rx="1.2" fill="#8a8a8a"/>
<path d="M37.5 273.6 L40 270.6 L42 272.4 L43.6 270.8 L46 273.6 Z" fill="#e6e6e6"/>
<circle cx="44.6" cy="267.3" r="0.8" fill="#e6e6e6"/>
<path d="M40.2 306 L41.9 307.8 L44.3 307.3 L44.8 309.7 L47 310.8 L46.1 313.2 L47.6 315.3 L45.5 316.8 L45.6 319.2 L43.1 319.3 L41.8 321.4 L40 319.8 L37.7 320.7 L36.9 318.4 L34.5 317.9 L35.1 315.5 L33 314 L34.6 312 L33.9 309.7 L36.3 309.3 L37.1 307 L39.5 307.6 Z" fill="#8a8a8a"/>
<circle cx="40.2" cy="313.7" r="4.6" fill="#141414"/>
<circle cx="38.3" cy="312.8" r="0.9" fill="#eee"/>
<circle cx="42.1" cy="312.8" r="0.9" fill="#eee"/>
<path d="M38.8 314.8 H41.6 Q41.2 317 40.2 317 Q39.2 317 38.8 314.8 Z" fill="#eee"/>
</svg>
<div class="t" style="left:13px;width:53px;text-align:center;top:60.47px;font-size:7.6px;color:#2d9cdb">Layers</div>
<div class="t" style="left:13px;width:53px;text-align:center;top:104.47px;font-size:7.6px;color:#d4d4d4">Components</div>
<div class="t" style="left:13px;width:53px;text-align:center;top:148.47px;font-size:7.6px;color:#d4d4d4">Styles</div>
<div class="t" style="left:13px;width:53px;text-align:center;top:192.47px;font-size:7.6px;color:#d4d4d4">Variables</div>
<div class="t" style="left:13px;width:53px;text-align:center;top:236.47px;font-size:7.6px;color:#d4d4d4">Icons</div>
<div class="t" style="left:13px;width:53px;text-align:center;top:280.47px;font-size:7.6px;color:#d4d4d4">Photos</div>
<div class="t" style="left:13px;width:53px;text-align:center;top:324.47px;font-size:7.6px;color:#d4d4d4">Illustrations</div>
<!-- /NAV -->
<!-- layers panel -->
<div class="a" style="left:70px;top:34px;width:159.5px;height:381px;background:#1a1a1a;border-radius:3px;box-shadow:0 0 0 0.5px #161616"></div>
<div class="a" style="left:73px;top:37px;width:101px;height:18px;background:#1a1a1a;border:1px solid #333;border-radius:3px"></div>
<div class="a" style="left:176px;top:39px;width:16px;height:15px;background:#333;border-radius:2px"></div>
<div class="a" style="left:72px;top:59px;width:156px;height:21px;background:#1c3341"></div>
<div class="a" style="left:72px;top:80px;width:156px;height:103px;background:#1a242b"></div>

<!-- LP --><svg style="left:0;top:0" width="240" height="200">
<circle cx="81.7" cy="45.6" r="2.9" fill="none" stroke="#dedede" stroke-width="1.1"/>
<path d="M83.8 47.7 L86 49.9" stroke="#dedede" stroke-width="1.2" stroke-linecap="round"/>
<path d="M180.6 42.9 H187.9 L185.2 46.9 V49.6 L183.3 50.5 V46.9 Z" fill="none" stroke="#ececec" stroke-width="1.1" stroke-linejoin="round"/>
<path d="M196.2 42.6 L199.5 45.2 L202.8 42.6 M196.2 50.8 L199.5 48.2 L202.8 50.8" fill="none" stroke="#e0e0e0" stroke-width="1"/>
<path d="M218.4 46.5 V42.5 L216.6 41.6 H214.3 V51.3 H217.3" fill="none" stroke="#dcdcdc" stroke-width="0.9"/>
<path d="M216.6 41.6 V43.6 H218.4" fill="none" stroke="#dcdcdc" stroke-width="0.8"/>
<circle cx="220.3" cy="49.9" r="2.9" fill="#1b1b1b" stroke="#dcdcdc" stroke-width="0.9"/>
<path d="M220.3 48.3 V51.5 M218.7 49.9 H221.9" stroke="#dcdcdc" stroke-width="0.8"/>
<path d="M75.9 68.3 H79.5 L77.7 70.9 Z" fill="#aaa"/>
<path d="M86.6 66.5 V74 M89.9 66.5 V74 M84.6 68.5 H92 M84.6 71.8 H92" stroke="#f0f0f0" stroke-width="1.1"/>
<path d="M83.3 89.3 H86.9 L85.1 91.9 Z" fill="#aaa"/>
<path d="M92.9 88.4 H97.5 M92.9 91.3 H100.3 M92.9 94.2 H97.5" stroke="#f0f0f0" stroke-width="1.2"/>
<path d="M102.2 108.9 H107.7 M104.95 108.9 V114.7 M103.6 114.7 H106.3" stroke="#d2d2d2" stroke-width="1.15"/><path d="M102.2 108.3 V110.3 M107.7 108.3 V110.3" stroke="#d2d2d2" stroke-width="0.6"/>
<path d="M102.2 129.6 H107.7 M104.95 129.6 V135.4 M103.6 135.4 H106.3" stroke="#d2d2d2" stroke-width="1.15"/><path d="M102.2 129.0 V131.0 M107.7 129.0 V131.0" stroke="#d2d2d2" stroke-width="0.6"/>
<path d="M102.2 150.4 H107.7 M104.95 150.4 V156.2 M103.6 156.2 H106.3" stroke="#d2d2d2" stroke-width="1.15"/><path d="M102.2 149.8 V151.8 M107.7 149.8 V151.8" stroke="#d2d2d2" stroke-width="0.6"/>
<path d="M102.2 171.1 H107.7 M104.95 171.1 V176.9 M103.6 176.9 H106.3" stroke="#d2d2d2" stroke-width="1.15"/><path d="M102.2 170.5 V172.5 M107.7 170.5 V172.5" stroke="#d2d2d2" stroke-width="0.6"/>
</svg>
<div class="t" style="left:93px;top:43.33px;font-size:8px;color:#555;font-weight:normal;">Search</div>
<div class="t" style="left:95.5px;top:65.83px;font-size:8px;color:#fff;font-weight:bold;-webkit-text-stroke:0;">Frame</div>
<div class="t" style="left:103.3px;top:86.73px;font-size:8px;color:#f2f2f2;font-weight:normal;">Frame</div>
<div class="t" style="left:111.2px;top:107.13px;font-size:8px;color:#eee;font-weight:normal;letter-spacing:0.1px;">Maple Heights</div>
<div class="t" style="left:111.2px;top:127.83px;font-size:8px;color:#eee;font-weight:normal;letter-spacing:0.1px;">Jeannette Grisham</div>
<div class="t" style="left:111.2px;top:148.63px;font-size:8px;color:#eee;font-weight:normal;letter-spacing:0.1px;">BronwynDeluca@example.c...</div>
<div class="t" style="left:111.2px;top:169.33px;font-size:8px;color:#eee;font-weight:normal;letter-spacing:0.1px;">3718 E Pine Tree Way, Equit...</div>
<!-- /LP -->
<!-- toolbar -->
<div class="a" style="left:234px;top:34px;width:24px;height:210px;background:#1b1b1b;border-radius:3px"></div>
<!-- floating toolbar -->
<div class="a" style="left:351px;top:34px;width:86px;height:24px;background:#1b1b1b;border-radius:3px"></div>

<!-- TB --><svg style="left:0;top:0" width="270" height="250">
<path d="M241.9 41 L250.4 48.1 L246.6 48.4 L242.4 52.3 Z" fill="#1e9be9"/>
<path d="M241.7 66 H250.3 M241.7 69.3 H250.3 M244.3 63.3 V72 M247.6 63.3 V72" stroke="#b4b4b4" stroke-width="1.4"/>
<rect x="241.6" y="83.3" width="8.8" height="8.6" rx="1.2" fill="#9a9a9a" stroke="#c4c4c4" stroke-width="1"/>
<path d="M241.4 104.3 H250.6 V106.6 M241.4 104.3 V106.6 M246 104.3 V113.6 M243.6 113.6 H248.4" stroke="#bdbdbd" stroke-width="1.6" fill="none"/>
<path d="M241.2 134.3 L242.2 129.3 L246.2 126.1 L249.3 129.2 L246.1 133.2 Z" fill="#c2c2c2" stroke="#c2c2c2" stroke-width="0.4" stroke-linejoin="round"/>
<path d="M247.9 125.3 L250.1 127.5" stroke="#c8c8c8" stroke-width="1.9" stroke-linecap="round"/>
<path d="M241.9 133.6 L245.3 130.2" stroke="#1b1b1b" stroke-width="0.75"/>
<rect x="241.3" y="145.9" width="9.5" height="8.2" rx="0.8" fill="#b2b2b2"/>
<path d="M242.6 152.6 L244.6 150.5 L245.8 151.5 L247.2 150.1 L249.4 152.6 Z" fill="#1b1b1b"/>
<circle cx="246.5" cy="170.7" r="5.6" fill="#b2b2b2"/>
<circle cx="246.5" cy="168.6" r="1.6" fill="#1b1b1b"/>
<rect x="243.6" y="172.3" width="5.8" height="1.5" rx="0.7" fill="#1b1b1b"/>
<rect x="239" y="188.1" width="14.1" height="6.7" rx="1.2" fill="#b8b8b8"/>
<rect x="241" y="190.4" width="10.1" height="2" fill="#1b1b1b"/>
<rect x="241.4" y="207.4" width="8.8" height="9.2" rx="2.3" fill="#b4b4b4"/>
<circle cx="250.7" cy="212" r="1.4" fill="#1b1b1b"/>
<circle cx="246.3" cy="206.9" r="1" fill="#1b1b1b"/>
<circle cx="246.3" cy="217.1" r="1" fill="#1b1b1b"/>
<ellipse cx="246.8" cy="212" rx="0.9" ry="1.5" fill="#1b1b1b"/>
<ellipse cx="246" cy="232" rx="5.3" ry="4.1" fill="#b4b4b4"/>
<path d="M244.6 235.6 L246 238.2 L247.4 235.6 Z" fill="#b4b4b4"/>
<rect x="243.4" y="231.3" width="5.2" height="1.3" fill="#3a3a3a"/>
<path d="M255 44.8 L256.4 46.1 L255 47.4 Z" fill="#d0d0d0"/>
<path d="M255 66.3 L256.4 67.6 L255 68.9 Z" fill="#d0d0d0"/>
<path d="M255 86.7 L256.4 88.0 L255 89.3 Z" fill="#d0d0d0"/>
<path d="M255 128.0 L256.4 129.3 L255 130.6 Z" fill="#d0d0d0"/>
<path d="M255 189.9 L256.4 191.2 L255 192.5 Z" fill="#d0d0d0"/>
<path d="M255 230.7 L256.4 232.0 L255 233.3 Z" fill="#d0d0d0"/>
</svg>
<svg style="left:0;top:0" width="450" height="70">
<path d="M365.40 46.30 L367.95 48.51 M364.93 47.43 L365.17 50.79 M363.80 47.90 L361.59 50.45 M362.67 47.43 L359.31 47.67 M362.20 46.30 L359.65 44.09 M362.67 45.17 L362.43 41.81 M363.80 44.70 L366.01 42.15 M364.93 45.17 L368.29 44.93 " stroke="#e8e8e8" stroke-width="1.3" stroke-linecap="round" fill="none"/>
<g fill="none" stroke="#e0e0e0" stroke-width="1">
<rect x="379.6" y="42" width="9.2" height="9.2"/>
<path d="M382 45.2 Q383.3 43.8 384.8 45 L386.8 47.2 Q385.6 49.4 383.4 48.3 Z" stroke-width="0.8"/>
</g>
<g fill="#e8e8e8"><rect x="378.7" y="41.2" width="1.9" height="1.9" rx="0.4"/><rect x="387.8" y="41.2" width="1.9" height="1.9" rx="0.4"/><rect x="378.7" y="50.2" width="1.9" height="1.9" rx="0.4"/><rect x="387.8" y="50.2" width="1.9" height="1.9" rx="0.4"/></g>
<g fill="none" stroke="#e0e0e0" stroke-width="1.1">
<path d="M400.5 42.4 H406.6 V48.4 H400.5 Z"/>
<path d="M402.6 44.2 H408.5 V50.3 H402.6 Z"/>
</g>
<g fill="#f0f0f0"><rect x="399.7" y="41.6" width="1.6" height="1.6"/><rect x="405.8" y="41.6" width="1.6" height="1.6"/><rect x="407.7" y="49.5" width="1.6" height="1.6"/><rect x="401.8" y="49.5" width="1.6" height="1.6"/></g>
<path d="M422.70 43.50 L425.40 40.80 L428.10 43.50 L425.40 46.20 Z M419.90 46.30 L422.60 43.60 L425.30 46.30 L422.60 49.00 Z M425.50 46.30 L428.20 43.60 L430.90 46.30 L428.20 49.00 Z M422.70 49.10 L425.40 46.40 L428.10 49.10 L425.40 51.80 Z " fill="none" stroke="#d8d8d8" stroke-width="0.9"/>
</svg>
<!-- /TB -->
<!-- frame -->
<div class="t" style="left:303px;top:157.07px;font-size:8.3px;color:#2ea2ee">Frame</div>
<div class="a" style="left:302px;top:166px;width:188px;height:195px;background:#fff;border:1px solid #3aa3ea"></div>
<div class="a" style="left:412px;top:282px;width:68px;height:66px;background:#fae800"></div>
<!-- YT --><div class="t" style="left:396px;width:100px;text-align:center;top:283.11px;font-size:6.25px;color:#737048;-webkit-text-stroke:0">3718 E Pine Tree Way,</div>
<div class="t" style="left:396px;width:100px;text-align:center;top:290.31px;font-size:6.25px;color:#737048;-webkit-text-stroke:0">Equitable Bldg,</div>
<div class="t" style="left:396px;width:100px;text-align:center;top:297.31px;font-size:6.25px;color:#737048;-webkit-text-stroke:0">Montpelier, VT, 12526</div>
<div class="t" style="left:396px;width:100px;text-align:center;top:309.61px;font-size:6.25px;color:#737048;-webkit-text-stroke:0">BronwynDeluca@exam</div>
<div class="t" style="left:396px;width:100px;text-align:center;top:317.61px;font-size:6.25px;color:#737048;-webkit-text-stroke:0">ple.com</div>
<div class="t" style="left:396px;width:100px;text-align:center;top:329.31px;font-size:6.25px;color:#737048;-webkit-text-stroke:0">Jeannette Grisham</div>
<div class="t" style="left:396px;width:100px;text-align:center;top:341.31px;font-size:6.25px;color:#737048;-webkit-text-stroke:0">Maple Heights</div>
<!-- /YT -->
<div class="a" style="left:300px;top:165px;width:6px;height:6px;background:#fff;border:1px solid #2d9cdb"></div>
<div class="a" style="left:486px;top:165px;width:6px;height:6px;background:#fff;border:1px solid #2d9cdb"></div>
<div class="a" style="left:300px;top:357px;width:6px;height:6px;background:#fff;border:1px solid #2d9cdb"></div>
<div class="a" style="left:486px;top:357px;width:6px;height:6px;background:#fff;border:1px solid #2d9cdb"></div>
<div class="a" style="left:373px;top:364px;width:47px;height:12px;background:#1e9be9;border-radius:2px"></div>
<div class="t" style="left:373px;top:366.12px;width:47px;text-align:center;font-size:8.6px;color:#fff;-webkit-text-stroke:0.25px #fff">746 × 770</div>

<!-- right panel -->
<div class="a" style="left:529px;top:31px;width:161px;height:459px;background:#2d2d2d"></div>
<div class="a" style="left:530px;top:34px;width:154px;height:20px;background:#191919;border-radius:3px"></div>
<div class="a" style="left:530px;top:34px;width:52px;height:20px;background:#252525;border-radius:3px 0 0 3px"></div>
<div class="a" style="left:582px;top:34px;width:49.5px;height:20px;background:#1b1b1b;border-radius:3px"></div>
<div class="a" style="left:633px;top:34px;width:51px;height:20px;background:#1f1f1f;border-radius:3px"></div>
<div class="a" style="left:531px;top:57px;width:153px;height:133px;background:#1b1b1b;border-radius:3px"></div>
<div class="a" style="left:531px;top:195px;width:153px;height:24px;background:#1b1b1b;border-radius:3px"></div>
<div class="a" style="left:531px;top:223px;width:153px;height:24px;background:#1b1b1b;border-radius:3px"></div>
<div class="a" style="left:531px;top:252px;width:153px;height:24px;background:#1b1b1b;border-radius:3px"></div>
<div class="a" style="left:531px;top:280px;width:153px;height:44px;background:#1b1b1b;border-radius:3px"></div>
<div class="a" style="left:531px;top:329px;width:153px;height:24px;background:#1b1b1b;border-radius:3px"></div>
<div class="a" style="left:531px;top:357px;width:153px;height:107px;background:#1b1b1b;border-radius:3px"></div>
<div class="a" style="left:531px;top:468px;width:153px;height:30px;background:#1b1b1b;border-radius:3px"></div>
<div class="a" style="left:687px;top:106px;width:2px;height:321px;background:#4a4a4a;border-radius:1px"></div>
<div class="t" style="left:543px;top:39.99px;font-size:8.4px;color:#ececec;-webkit-text-stroke:0.35px #ececec;">Design</div>
<div class="t" style="left:595px;top:39.99px;font-size:8.4px;color:#d0d0d0;font-weight:normal;">Export</div>
<div class="t" style="left:639px;top:39.99px;font-size:8.4px;color:#d0d0d0;font-weight:normal;">Comments</div>
<div class="t" style="left:540.5px;top:89.47px;font-size:8.3px;color:#ececec;-webkit-text-stroke:0.4px #ececec">Custom size</div>
<div class="t" style="left:543px;top:109.29px;font-size:8.4px;color:#8a8a8a;font-weight:normal;">X</div>
<div class="t" style="left:555.8px;top:109.29px;font-size:8.4px;color:#e0e0e0;font-weight:normal;">798</div>
<div class="t" style="left:596px;top:109.29px;font-size:8.4px;color:#8a8a8a;font-weight:normal;">Y</div>
<div class="t" style="left:606.8px;top:109.29px;font-size:8.4px;color:#e0e0e0;font-weight:normal;">153</div>
<div class="t" style="left:541.1px;top:130.09px;font-size:8.4px;color:#8a8a8a;font-weight:normal;">W</div>
<div class="t" style="left:555.2px;top:130.09px;font-size:8.4px;color:#e0e0e0;font-weight:normal;">746</div>
<div class="t" style="left:594.4px;top:130.09px;font-size:8.4px;color:#8a8a8a;font-weight:normal;">H</div>
<div class="t" style="left:606.8px;top:130.09px;font-size:8.4px;color:#e0e0e0;font-weight:normal;">770</div>
<div class="t" style="left:555.2px;top:150.99px;font-size:8.4px;color:#e0e0e0;font-weight:normal;">0°</div>
<div class="t" style="left:606.8px;top:150.99px;font-size:8.4px;color:#e0e0e0;font-weight:normal;">0</div>
<div class="t" style="left:555.8px;top:171.79px;font-size:8.4px;color:#e0e0e0;font-weight:normal;">Clip content</div>
<div class="t" style="left:540.3px;top:203.13px;font-size:7.4px;letter-spacing:-0.22px;color:#e6e6e6;font-weight:bold;-webkit-text-stroke:0;">AUTO LAYOUT</div>
<div class="t" style="left:540.3px;top:231.83px;font-size:7.4px;letter-spacing:-0.22px;color:#e6e6e6;font-weight:bold;-webkit-text-stroke:0;">GRID LAYOUT</div>
<div class="t" style="left:540.3px;top:260.03px;font-size:7.4px;letter-spacing:-0.22px;color:#e6e6e6;font-weight:bold;-webkit-text-stroke:0;">LAYER</div>
<div class="t" style="left:540.3px;top:288.33px;font-size:7.4px;letter-spacing:-0.22px;color:#e6e6e6;font-weight:bold;-webkit-text-stroke:0;">FILLS</div>
<div class="t" style="left:540.3px;top:337.63px;font-size:7.4px;letter-spacing:-0.22px;color:#e6e6e6;font-weight:bold;-webkit-text-stroke:0;">BORDERS</div>
<div class="t" style="left:540.3px;top:366.03px;font-size:7.4px;letter-spacing:-0.22px;color:#e6e6e6;font-weight:bold;-webkit-text-stroke:0;">SELECTION</div>
<div class="t" style="left:540.3px;top:476.93px;font-size:7.4px;letter-spacing:-0.22px;color:#e6e6e6;font-weight:bold;-webkit-text-stroke:0;">EFFECTS</div>
<div class="t" style="left:612.3px;top:259.39px;font-size:8.4px;color:#d8d8d8;font-weight:normal;">100%</div>
<div class="t" style="left:640.5px;top:259.39px;font-size:8.4px;color:#d8d8d8;font-weight:normal;">Normal</div>
<div class="t" style="left:555.6px;top:309.19px;font-size:8.4px;color:#d8d8d8;font-weight:normal;">Background</div>
<div class="t" style="left:555.6px;top:386.29px;font-size:8.4px;color:#d8d8d8;font-weight:normal;">Background</div>
<div class="t" style="left:555.6px;top:406.79px;font-size:8.4px;color:#d8d8d8;font-weight:normal;">FAE800</div>
<div class="t" style="left:634.6px;top:406.79px;font-size:8.4px;color:#d8d8d8;font-weight:normal;">100%</div>
<div class="t" style="left:555.6px;top:427.79px;font-size:8.4px;color:#d8d8d8;font-weight:normal;">Secondary Text</div>
<div class="t" style="left:541.3px;top:447.99px;font-size:8.4px;color:#e6e6e6;font-weight:bold;-webkit-text-stroke:0;">Ag</div>
<div class="t" style="left:559.7px;top:447.99px;font-size:8.4px;color:#d8d8d8;font-weight:normal;">Inter</div>
<div class="t" style="left:582px;top:447.99px;font-size:8.4px;color:#d8d8d8;font-weight:normal;">24</div>
<div class="t" style="left:600px;top:447.99px;font-size:8.4px;color:#d8d8d8;font-weight:normal;">Regular</div>
<svg style="left:0;top:0" width="690" height="490">
<g fill="#e6e6e6">
<rect x="540" y="65.5" width="1.1" height="8.8"/><rect x="542.3" y="66.6" width="5.5" height="2.1"/><rect x="542.3" y="70.9" width="4" height="2.1"/>
<rect x="560.7" y="65.5" width="1.1" height="8.8"/><rect x="558" y="66.6" width="6.5" height="2.1"/><rect x="558.8" y="70.9" width="4.9" height="2.1"/>
<rect x="580" y="65.5" width="1.1" height="8.8"/><rect x="573.4" y="66.6" width="5.5" height="2.1"/><rect x="574.9" y="70.9" width="4" height="2.1"/>
<rect x="617.8" y="65.3" width="9.3" height="1.1"/><rect x="618.9" y="67.4" width="2.1" height="6.4"/><rect x="623.2" y="67.4" width="2.1" height="4.4"/>
<rect x="638.2" y="65.7" width="1.1" height="8.8"/><rect x="635" y="67" width="2.1" height="6.2"/><rect x="640.3" y="68" width="2.1" height="4.2"/>
<rect x="648.8" y="73.6" width="9.3" height="1.1"/><rect x="650" y="66.2" width="2.1" height="6.4"/><rect x="654.3" y="68.2" width="2.1" height="4.4"/>
</g>
<g fill="#6a6a6a">
<rect x="587.3" y="65.5" width="1" height="8.8"/><rect x="595.8" y="65.5" width="1" height="8.8"/><rect x="590.7" y="67.8" width="2.6" height="4.2"/>
<rect x="664.8" y="65.3" width="9" height="1"/><rect x="664.8" y="73.7" width="9" height="1"/><rect x="667.2" y="68.7" width="4.2" height="2.6"/>
</g>
<path d="M591.4 92.2 L593.2 94 L595 92.2" stroke="#777" stroke-width="0.8" fill="none"/>
<rect x="625.8" y="85.1" width="14.8" height="15.3" rx="2" fill="#2c2c2c"/>
<g fill="none" stroke="#e0e0e0" stroke-width="0.95">
<path d="M614.6 93 V88.3 H609 V97.6 H612.3"/>
<circle cx="615.3" cy="96" r="2.7"/>
<path d="M614.5 94.8 L616.3 96 L614.5 97.2 Z" fill="#e0e0e0" stroke-width="0.5"/>
<path d="M630 88.3 H634.2 L636.8 90.9 V97.3 H630 Z"/>
<path d="M634.2 88.3 V91 H636.8"/>
<path d="M644 89.5 H653.5 V93.6 L650.3 96.6 H644 Z"/>
<path d="M650.3 96.6 V93.6 H653.5"/>
<path d="M665.3 91 V88.8 H667.5 M671.2 88.8 H673.4 V91 M673.4 94.8 V97 H671.2 M667.5 97 H665.3 V94.8"/>
<path d="M666 89.5 L667.8 91.3 M672.7 89.5 L670.9 91.3 M672.7 96.3 L670.9 94.5 M666 96.3 L667.8 94.5" stroke-width="0.8"/>
</g>
<g fill="#e0e0e0">
<path d="M644.7 110.6 L648 113.3 L644.7 116 Z" fill="#8a8a8a"/>
<rect x="648.2" y="110.3" width="0.7" height="6" fill="#aaa"/>
<path d="M652.5 110.6 L649.2 113.3 L652.5 116 Z" fill="#f0f0f0"/>
<path d="M666.8 110 H672.3 L669.55 113 Z" fill="#8a8a8a"/>
<rect x="666.5" y="109.4" width="6.1" height="0.8" fill="#8a8a8a"/>
<rect x="666.5" y="113.1" width="6.1" height="0.7" fill="#aaa"/>
<path d="M666.8 116.6 H672.3 L669.55 113.9 Z" fill="#f0f0f0"/>
<rect x="666.5" y="116.5" width="6.1" height="0.8" fill="#f0f0f0"/>
</g>
<g fill="none" stroke="#e0e0e0" stroke-width="1">
<rect x="644.6" y="134.4" width="5.6" height="3.8" rx="0.8"/>
<path d="M648.5 134.4 V132.6 A1.9 1.9 0 0 1 652.3 132.6 V133.3"/>
<path d="M644.3 153.3 V151.2 H646.4 M651 151.2 H653.1 V153.3 M653.1 156.5 V158.7 H651 M646.4 158.7 H644.3 V156.5"/>
<path d="M665.3 153.5 A4.4 4.4 0 0 1 667.8 151 M671.3 151 A4.4 4.4 0 0 1 673.8 153.5 M673.8 156.6 A4.4 4.4 0 0 1 671.3 159.1 M667.8 159.1 A4.4 4.4 0 0 1 665.3 156.6"/>
</g>
<path d="M542.2 152.3 V157.6 H547.8" stroke="#7a7a7a" stroke-width="0.9" fill="none"/>
<path d="M542.6 154.6 A3.2 3.2 0 0 1 545.3 157.4" stroke="#7a7a7a" stroke-width="0.7" fill="none"/>
<path d="M594.4 158.3 A5.2 5.2 0 0 1 599.7 152.6" stroke="#6a6a6a" stroke-width="1" fill="none"/>
<rect x="541.7" y="172.1" width="7.7" height="7.5" rx="1" fill="#1e9be9"/>
<path d="M543.3 175.8 L544.9 177.5 L547.9 174" stroke="#1b1b1b" stroke-width="1.1" fill="none"/>
<g stroke="#e6e6e6" stroke-width="1.2">
<path d="M668.9 202.8 V210.8 M664.9 206.8 H672.9"/>
<path d="M668.9 231.5 V239.5 M664.9 235.5 H672.9"/>
<path d="M668.9 288.1 V296.1 M664.9 292.1 H672.9"/>
<path d="M668.9 337.2 V345.2 M664.9 341.2 H672.9"/>
<path d="M668.9 476.7 V484.7 M664.9 480.7 H672.9"/>
</g>
<path d="M672 262.5 L673.8 264.3 L675.6 262.5" stroke="#777" stroke-width="0.8" fill="none"/>
<path d="M648.7 288.6 C646.8 291.2 645.4 292.9 645.4 294.3 A3.3 3.3 0 0 0 652 294.3 C652 292.9 650.6 291.2 648.7 288.6 Z" fill="none" stroke="#e0e0e0" stroke-width="0.95"/>
<circle cx="545.4" cy="313.2" r="5.4" fill="#fff"/>
<path d="M643.3 314.3 Q648.7 307.8 654.2 314.3" stroke="#e0e0e0" stroke-width="1" fill="none"/>
<circle cx="648.7" cy="314" r="2" fill="none" stroke="#e0e0e0" stroke-width="0.95"/>
<path d="M647.6 315.5 L648.7 316.6 L649.8 315.5" stroke="#e0e0e0" stroke-width="0.7" fill="none"/>
<path d="M665.5 309.7 H672.9 M667.7 309.7 V308.6 H670.7 V309.7 M666.4 310.5 L667 316.8 H671.4 L672 310.5" stroke="#e0e0e0" stroke-width="0.95" fill="none"/>
<path d="M646 346 V336.5 M643.8 338.8 L646 336.5 L648.2 338.8 M651.2 336 V345.5 M649 343.2 L651.2 345.5 L653.4 343.2" stroke="#e6e6e6" stroke-width="1" fill="none"/>
<circle cx="545.4" cy="390.3" r="5.4" fill="#fff"/>
<rect x="540.5" y="406" width="9.6" height="9.6" fill="#fae800"/>
<circle cx="545.4" cy="431.8" r="5" fill="#8a8a8a" stroke="#555" stroke-width="0.8"/>
</svg>
<!-- /RP -->
<!-- bottom scrollbar -->
<div class="a" style="left:79px;top:488px;width:451px;height:1px;background:#262626;border-radius:1px 1px 0 0"></div>
<div class="a" style="left:79px;top:489px;width:451px;height:1px;background:#a0a0a0"></div>
</body></html>
